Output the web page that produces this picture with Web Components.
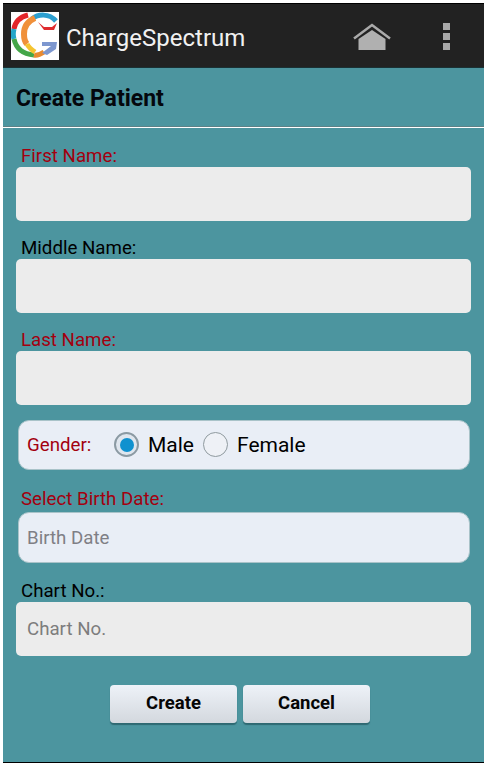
<!DOCTYPE html>
<html>
<head>
<meta charset="utf-8">
<title>ChargeSpectrum</title>
<style>
html, body { margin: 0; background: #fff; }
body { font-family: Roboto, "Liberation Sans", sans-serif; }
</style>
</head>
<body>
<phone-app></phone-app>

<script>
function define(name, html) {
    const template = document.createElement("template")
    template.innerHTML = html
    customElements.define(name, class extends HTMLElement {
        constructor() {
            super()
            const shadow = this.attachShadow({mode: "open"})
            shadow.append(template.content.cloneNode(true))
            for (const attr of this.getAttributeNames()) {
                shadow.querySelectorAll(`[data-${attr}]`).forEach(el => el.textContent = this.getAttribute(attr))
            }
        }
    })
}

define("action-bar", /*html*/`
    <style>
    :host { display: flex; align-items: center; height: 63px; background: #222; border-top: 1px solid #000; border-bottom: 1px solid #1a3134; }
    #logo { width: 48px; height: 48px; margin-left: 8px; background: #fff; flex: none; }
    #logo svg { display: block; }
    h2 { margin: 0 0 0 7px; padding-top: 5px; flex: 1; font: 400 24px Roboto, sans-serif; color: #f1f1f1; }
    #home { margin: 2px 52px 0 0; display: block; }
    #more { margin: 2px 34px 0 0; display: block; }
    </style>
    <div id="logo">
        <svg width="48" height="48" viewBox="0 0 48 48" fill="none">
            <path d="M17 3C9 5 4 10 3 17" stroke="#e3262b" stroke-width="5"/>
            <path d="M3 17C2 21 2 24 3 27" stroke="#22a6c9" stroke-width="5"/>
            <path d="M3 27C5 36 11 42 23 43" stroke="#44a648" stroke-width="5"/>
            <path d="M23 43C27 44 30 42 33 40" stroke="#e88a30" stroke-width="5"/>
            <path d="M21 7C27 2 38 1 45 9" stroke="#2c9fd0" stroke-width="5"/>
            <path d="M24 6C17 9 13 15 13 22C13 26 14 30 16 32" stroke="#f0903a" stroke-width="6"/>
            <path d="M16 32C18 36 21 38 24 40" stroke="#f5c431" stroke-width="5"/>
            <path d="M27 10L33 15H41L46 11L43 18H33Z" fill="#df2a2e"/>
            <path d="M31 30H46L45 37L36 43L31 41L40 34H31Z" fill="#7d97cf"/>
        </svg>
    </div>
    <h2><slot></slot></h2>
    <svg id="home" width="38" height="28" viewBox="0 0 38 28">
        <path d="M1 15.5L19 2L37 15.5" fill="none" stroke="#aaa" stroke-width="2.5"/>
        <path d="M5.5 27V16L19 7L32.5 16V27Z" fill="#b0b0b0"/>
    </svg>
    <svg id="more" width="7" height="28" viewBox="0 0 7 28" fill="#aaa">
        <rect width="7" height="7"/><rect y="10" width="7" height="7"/><rect y="20" width="7" height="7"/>
    </svg>
`)

define("page-title", /*html*/`
    <style>
    :host { display: block; height: 59px; border-bottom: 1px solid #fff; box-shadow: inset 0 -1px 0 #5d8287; }
    h1 { margin: 0; padding: 18px 0 0 13px; font: 700 23px/26px Roboto, sans-serif; color: #04070c; }
    </style>
    <h1><slot></slot></h1>
`)

define("text-field", /*html*/`
    <style>
    :host { display: block; }
    label { display: block; height: 20px; padding-left: 18px; font: 400 18.7px/18px Roboto, sans-serif; color: var(--label, #000); }
    div { margin-left: 13px; width: 455px; height: 53.5px; box-sizing: border-box; padding-left: 11px; background: #ececec; border-radius: 5px; font: 400 18.7px/55px Roboto, sans-serif; color: #7d7d7d; }
    </style>
    <label data-label></label>
    <div data-hint></div>
`)

define("date-field", /*html*/`
    <style>
    :host { display: block; }
    label { display: block; height: 21px; padding-left: 18px; font: 400 18.7px/17px Roboto, sans-serif; color: #a3000f; }
    div { margin-left: 15px; width: 452px; height: 51px; box-sizing: border-box; padding-left: 8px; background: #e9eef6; border: 1px solid #a9c3c9; border-radius: 11px; font: 400 18.7px/50px Roboto, sans-serif; color: #7f7f85; }
    </style>
    <label data-label></label>
    <div data-hint></div>
`)

define("radio-dot", /*html*/`
    <style>
    :host { display: block; width: 25px; height: 25px; box-sizing: border-box; border-radius: 50%; border: 1px solid #8f9a9f; background: #eef1f6; position: relative; }
    :host([on]) { background: #dfe6ee; border: 2px solid #8b9aa3; }
    :host([on])::after { content: ""; position: absolute; inset: 3.5px; border-radius: 50%; background: #0f91cf; }
    </style>
`)

define("gender-row", /*html*/`
    <style>
    :host { display: flex; align-items: center; margin-left: 15px; width: 452px; height: 50px; box-sizing: border-box; padding-left: 8px; background: #e9eef6; border: 1px solid #a9c3c9; border-radius: 11px; font: 400 21px Roboto, sans-serif; color: #000; }
    #label { font-size: 18.7px; color: #a3000f; width: 87px; }
    #male, #female { margin: 0 9px; }
    </style>
    <span id="label">Gender:</span>
    <radio-dot on></radio-dot><span id="male">Male</span>
    <radio-dot></radio-dot><span id="female">Female</span>
`)

define("push-button", /*html*/`
    <style>
    :host { display: block; width: 127px; height: 38px; border-radius: 4px; background: linear-gradient(#eef2f8, #d3d8de); box-shadow: 0 2px 1px #2f6972; font: 700 18.5px/36px Roboto, sans-serif; color: #060606; text-align: center; }
    </style>
    <slot></slot>
`)

define("create-patient-form", /*html*/`
    <style>
    :host { display: flex; flex-direction: column; padding-top: 19px; }
    text-field + text-field { margin-top: 18.5px; }
    gender-row { margin-top: 15px; }
    date-field { margin-top: 21px; }
    #chart { margin-top: 19.5px; }
    #buttons { display: flex; justify-content: center; gap: 6px; margin-top: 29.5px; padding-right: 7px; }
    </style>
    <text-field label="First Name:" style="--label:#a3000f"></text-field>
    <text-field label="Middle Name:"></text-field>
    <text-field label="Last Name:" style="--label:#a3000f"></text-field>
    <gender-row></gender-row>
    <date-field label="Select Birth Date:" hint="Birth Date"></date-field>
    <text-field id="chart" label="Chart No.:" hint="Chart No."></text-field>
    <div id="buttons">
        <push-button>Create</push-button>
        <push-button>Cancel</push-button>
    </div>
`)

define("phone-app", /*html*/`
    <style>
    :host { display: block; margin: 3px 0 0 3px; width: 481px; height: 760px; box-sizing: border-box; background: #4c959f; border-bottom: 1px solid #000; overflow: hidden; }
    </style>
    <action-bar>ChargeSpectrum</action-bar>
    <page-title>Create Patient</page-title>
    <create-patient-form></create-patient-form>
`)
</script>
</body>
</html>
